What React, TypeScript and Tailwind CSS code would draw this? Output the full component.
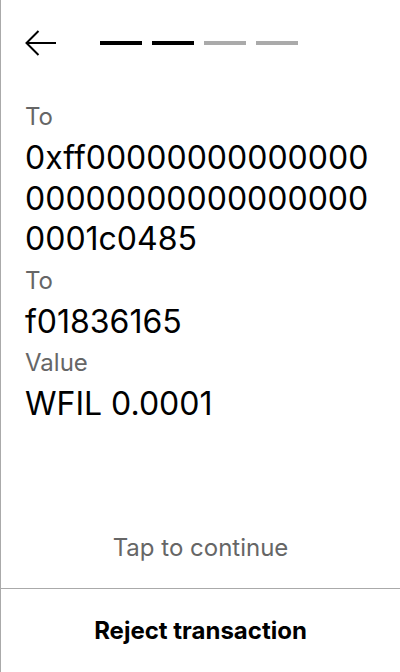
import React from "react";

const font = { fontFamily: "Inter, 'Noto Sans', sans-serif" };

const ADDRESS = "0xff" + "0".repeat(34) + "1c0485";

function Field({ label, value }: { label: string; value: string }) {
  return (
    <div className="flex flex-col">
      <div className="text-[24px] leading-[42px] text-[#666]">{label}</div>
      <div className="text-[32px] leading-[40.5px] text-black break-all">{value}</div>
    </div>
  );
}

export default function App() {
  return (
    <div
      style={font}
      className="w-[400px] h-[672px] bg-white border-l border-[#aaa] flex flex-col"
    >
      <div className="flex items-center pl-6 pt-[30px] h-[56px]">
        <svg width="32" height="26" viewBox="0 0 32 26" fill="none" stroke="black" strokeWidth="2">
          <path d="M31 13H2" />
          <path d="M13.5 1L1.5 13L13.5 25" />
        </svg>
        <div className="flex gap-[10px] ml-[43px]">
          <div className="w-[42px] h-[4px] bg-black" />
          <div className="w-[42px] h-[4px] bg-black" />
          <div className="w-[42px] h-[4px] bg-[#aaa]" />
          <div className="w-[42px] h-[4px] bg-[#aaa]" />
        </div>
      </div>
      <div className="flex flex-col pl-6 pr-[23px] pt-[40px]">
        <Field label="To" value={ADDRESS} />
        <Field label="To" value="f01836165" />
        <Field label="Value" value="WFIL 0.0001" />
      </div>
      <div className="flex-1" />
      <div className="text-center text-[24px] leading-[32px] text-[#666] pb-[24px]">Tap to continue</div>
      <div className="border-t border-[#aaa] h-[84px] flex items-center justify-center">
        <span className="text-[24px] font-bold text-black">Reject transaction</span>
      </div>
    </div>
  );
}
